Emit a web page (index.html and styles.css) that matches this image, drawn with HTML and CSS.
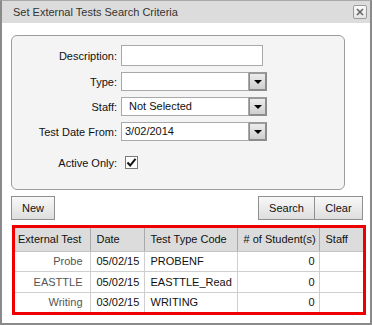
FILE: index.html
```html
<!DOCTYPE html>
<html>
<head>
<meta charset="utf-8">
<link rel="stylesheet" href="styles.css">
</head>
<body>
<div class="window">
  <div class="titlebar">
    <span class="title">Set External Tests Search Criteria</span>
    <span class="close"><svg width="8" height="8" viewBox="0 0 8 8"><path d="M1 1L7 7M7 1L1 7" stroke="#666" stroke-width="1.6"/></svg></span>
  </div>
  <div class="content">
    <div class="criteria">
      <div class="form">
        <label class="lbl">Description:</label>
        <div class="field"><div class="textbox"></div></div>
        <label class="lbl">Type:</label>
        <div class="field"><div class="select"><div class="sel-text"></div><div class="sel-btn"><span class="tri"></span></div></div></div>
        <label class="lbl">Staff:</label>
        <div class="field"><div class="select"><div class="sel-text pad-wide">Not Selected</div><div class="sel-btn"><span class="tri"></span></div></div></div>
        <label class="lbl">Test Date From:</label>
        <div class="field"><div class="select"><div class="sel-text">3/02/2014</div><div class="sel-btn"><span class="tri"></span></div></div></div>
        <label class="lbl lbl-last">Active Only:</label>
        <div class="field field-last"><span class="check"><svg width="11" height="11" viewBox="0 0 11 11"><path d="M1.5 5.5L4.2 8.5L9.5 1.8" fill="none" stroke="#111" stroke-width="2"/></svg></span></div>
      </div>
    </div>
    <div class="buttons">
      <button class="btn btn-new">New</button>
      <div class="btn-group">
        <button class="btn btn-search">Search</button>
        <button class="btn btn-clear">Clear</button>
      </div>
    </div>
    <div class="grid-wrap">
      <table class="grid">
        <colgroup><col class="c1"><col class="c2"><col class="c3"><col class="c4"><col class="c5"></colgroup>
        <thead>
          <tr><th class="h-first">External Test</th><th>Date</th><th>Test Type Code</th><th># of Student(s)</th><th>Staff</th></tr>
        </thead>
        <tbody>
          <tr><td class="name">Probe</td><td>05/02/15</td><td>PROBENF</td><td class="num">0</td><td></td></tr>
          <tr class="r2"><td class="name">EASTTLE</td><td>05/02/15</td><td>EASTTLE_Read</td><td class="num">0</td><td></td></tr>
          <tr><td class="name">Writing</td><td>03/02/15</td><td>WRITING</td><td class="num">0</td><td></td></tr>
        </tbody>
      </table>
    </div>
  </div>
</div>
</body>
</html>
```

FILE: styles.css
```css
* { box-sizing: border-box; }
html, body { margin: 0; padding: 0; background: #fff; }
body { font-family: "Liberation Sans", Arial, sans-serif; font-size: 11px; color: #111; }

.window {
  width: 372px;
  height: 325px;
  border: 2px solid #8a8a8a;
  border-top: 1px solid #a8a8a8;
  background: #fff;
  overflow: hidden;
}

.titlebar {
  height: 22px;
  background: #dcdcdc;
  display: flex;
  align-items: center;
  justify-content: space-between;
  padding: 0 3px 0 11px;
}
.title { color: #333; font-size: 11px; }
.close {
  width: 14px;
  height: 14px;
  border: 1px solid #9a9a9a;
  border-radius: 2px;
  background: linear-gradient(#fafafa, #e4e4e4);
  display: flex;
  align-items: center;
  justify-content: center;
}

.content { padding: 12px 0 0 9px; }

.criteria {
  width: 334px;
  height: 155px;
  border: 1px solid #9c9c9c;
  border-radius: 6px;
  background: #f4f4f4;
  padding-top: 9px;
}

.form {
  display: grid;
  grid-template-columns: 105px auto;
  column-gap: 4px;
  row-gap: 6px;
  align-items: center;
}
.lbl { text-align: right; color: #111; }
.field { display: flex; align-items: center; }

.textbox {
  width: 142px;
  height: 21px;
  border: 1px solid #a9a9a9;
  background: #fff;
}

.select { display: flex; height: 19px; }
.sel-text {
  width: 128px;
  height: 19px;
  border: 1px solid #a9a9a9;
  background: #fff;
  padding-left: 3px;
  line-height: 17px;
  color: #111;
}
.sel-text.pad-wide { padding-left: 7px; }
.sel-btn {
  width: 18px;
  height: 19px;
  border: 2px solid #8c8c8c;
  border-left-width: 1px;
  border-top-color: #9a9a9a;
  background: linear-gradient(#ececec, #cfcfcf);
  display: flex;
  align-items: center;
  justify-content: center;
}
.tri {
  width: 0;
  height: 0;
  border-left: 4px solid transparent;
  border-right: 4px solid transparent;
  border-top: 4px solid #000;
  margin-top: 1px;
}

.lbl-last, .field-last { margin-top: 9px; }
.check {
  width: 13px;
  height: 13px;
  margin-left: 4px;
  border: 1px solid #7a7a7a;
  background: #fdfdfd;
  display: flex;
  align-items: center;
  justify-content: center;
}

.buttons {
  width: 352px;
  margin-top: 6px;
  display: flex;
  justify-content: space-between;
}
.btn-group { display: flex; }
.btn {
  font-family: "Liberation Sans", Arial, sans-serif;
  font-size: 11px;
  color: #111;
  height: 24px;
  border: 1px solid #8f8f8f;
  background: linear-gradient(#f8f8f8, #dedede);
  padding: 0;
  margin: 0;
  border-radius: 0;
}
.btn-new { width: 44px; }
.btn-search { width: 57px; }
.btn-clear { width: 48px; border-left: none; }

.grid-wrap {
  width: 354px;
  margin: 5px 0 0 1px;
  border: 3px solid #ee0000;
}
.grid {
  width: 348px;
  border-collapse: collapse;
  table-layout: fixed;
}
.c1 { width: 75px; }
.c2 { width: 54px; }
.c3 { width: 93px; }
.c4 { width: 82px; }
.c5 { width: 44px; }

.grid th {
  background: #dcdcdc;
  font-weight: normal;
  text-align: left;
  height: 23px;
  padding: 0 6px;
  border-left: 1px solid #a9a9a9;
  border-bottom: 1px solid #c4c4c4;
  white-space: nowrap;
  color: #111;
}
.grid th.h-first { border-left: none; padding-left: 3px; }
.grid td {
  height: 20px;
  padding: 0 6px;
  border-left: 1px solid #cfcfcf;
  border-bottom: 1px solid #cfcfcf;
  white-space: nowrap;
  color: #111;
}
.grid tr.r2 td { height: 21px; }
.grid tbody tr:last-child td { border-bottom: none; }
.grid td.name { border-left: none; text-align: right; color: #555; padding-right: 7px; }
.grid td.num { text-align: right; padding-right: 4px; }
```
